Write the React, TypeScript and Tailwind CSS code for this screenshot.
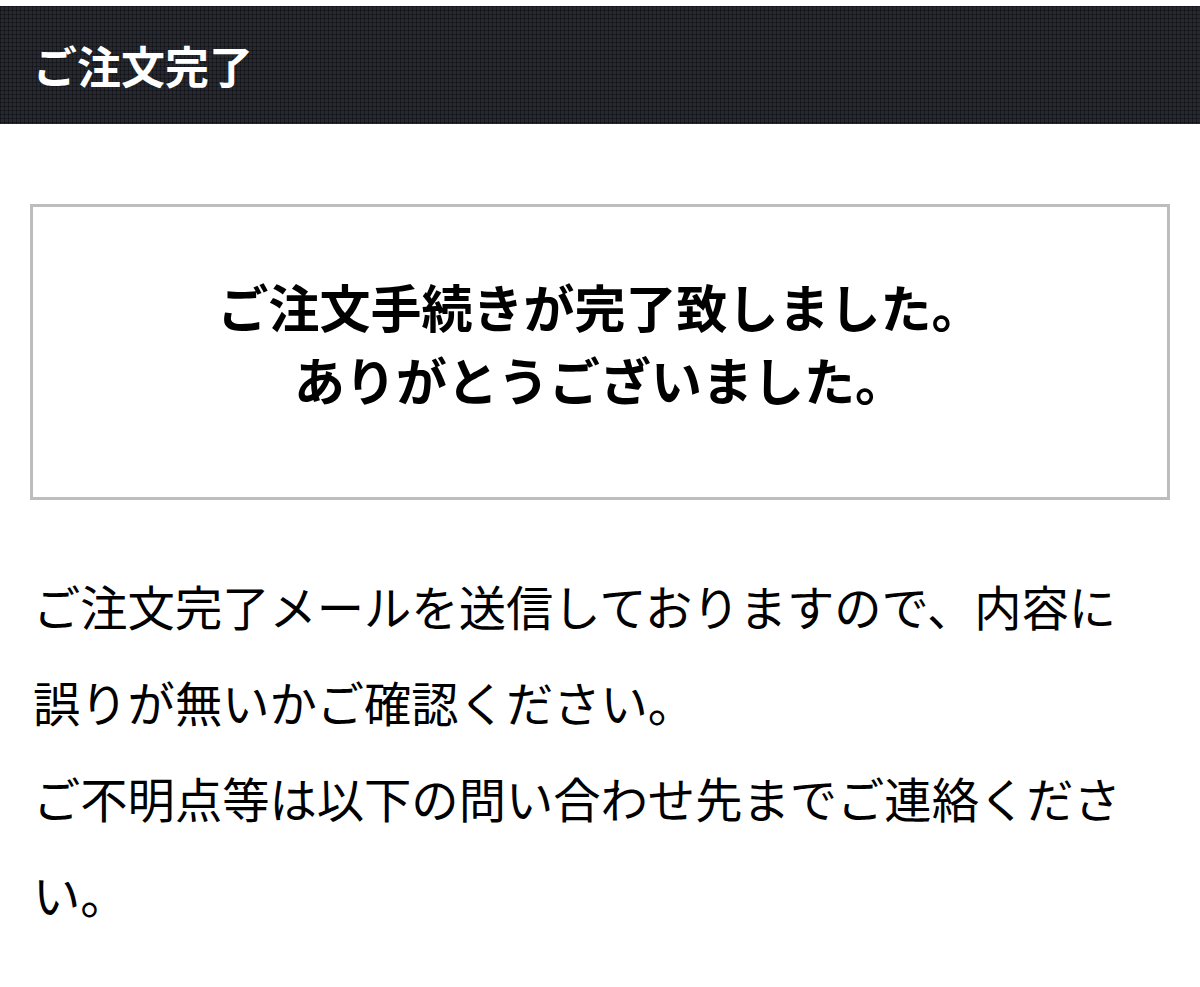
export default function App() {
  const jp = '"Noto Sans CJK JP", "Noto Sans", sans-serif';
  return (
    <div className="min-h-[987px] bg-white text-black" style={{ fontFamily: jp }}>
      {/* Page title bar with a fine woven texture */}
      <div className="pt-[6px]">
        <header className="flex h-[118px] items-center bg-[#262931] bg-[image:linear-gradient(rgba(0,0,0,0.35)_1px,transparent_1px),linear-gradient(90deg,rgba(0,0,0,0.35)_1px,transparent_1px)] bg-[size:4px_4px] px-[33px]">
          <h1 className="text-[44px] font-bold leading-none text-white">ご注文完了</h1>
        </header>
      </div>

      {/* Completion notice */}
      <div className="mx-[30px] mt-[80px] flex h-[296px] flex-col items-center justify-center border-[3px] border-[#bdbdbd] pb-[18px] text-center">
        <p className="text-[51px] font-bold leading-[73px]">
          ご注文手続きが完了致しました。
          <br />
          ありがとうございました。
        </p>
      </div>

      {/* Follow-up guidance */}
      <div className="mt-[58px] w-[1143px] pl-[33px] text-[47.3px] leading-[96px]">
        <p>
          ご注文完了メールを送信しておりますので、内容に誤りが無いかご確認ください。
          <br />
          ご不明点等は以下の問い合わせ先までご連絡ください。
        </p>
      </div>
    </div>
  );
}
